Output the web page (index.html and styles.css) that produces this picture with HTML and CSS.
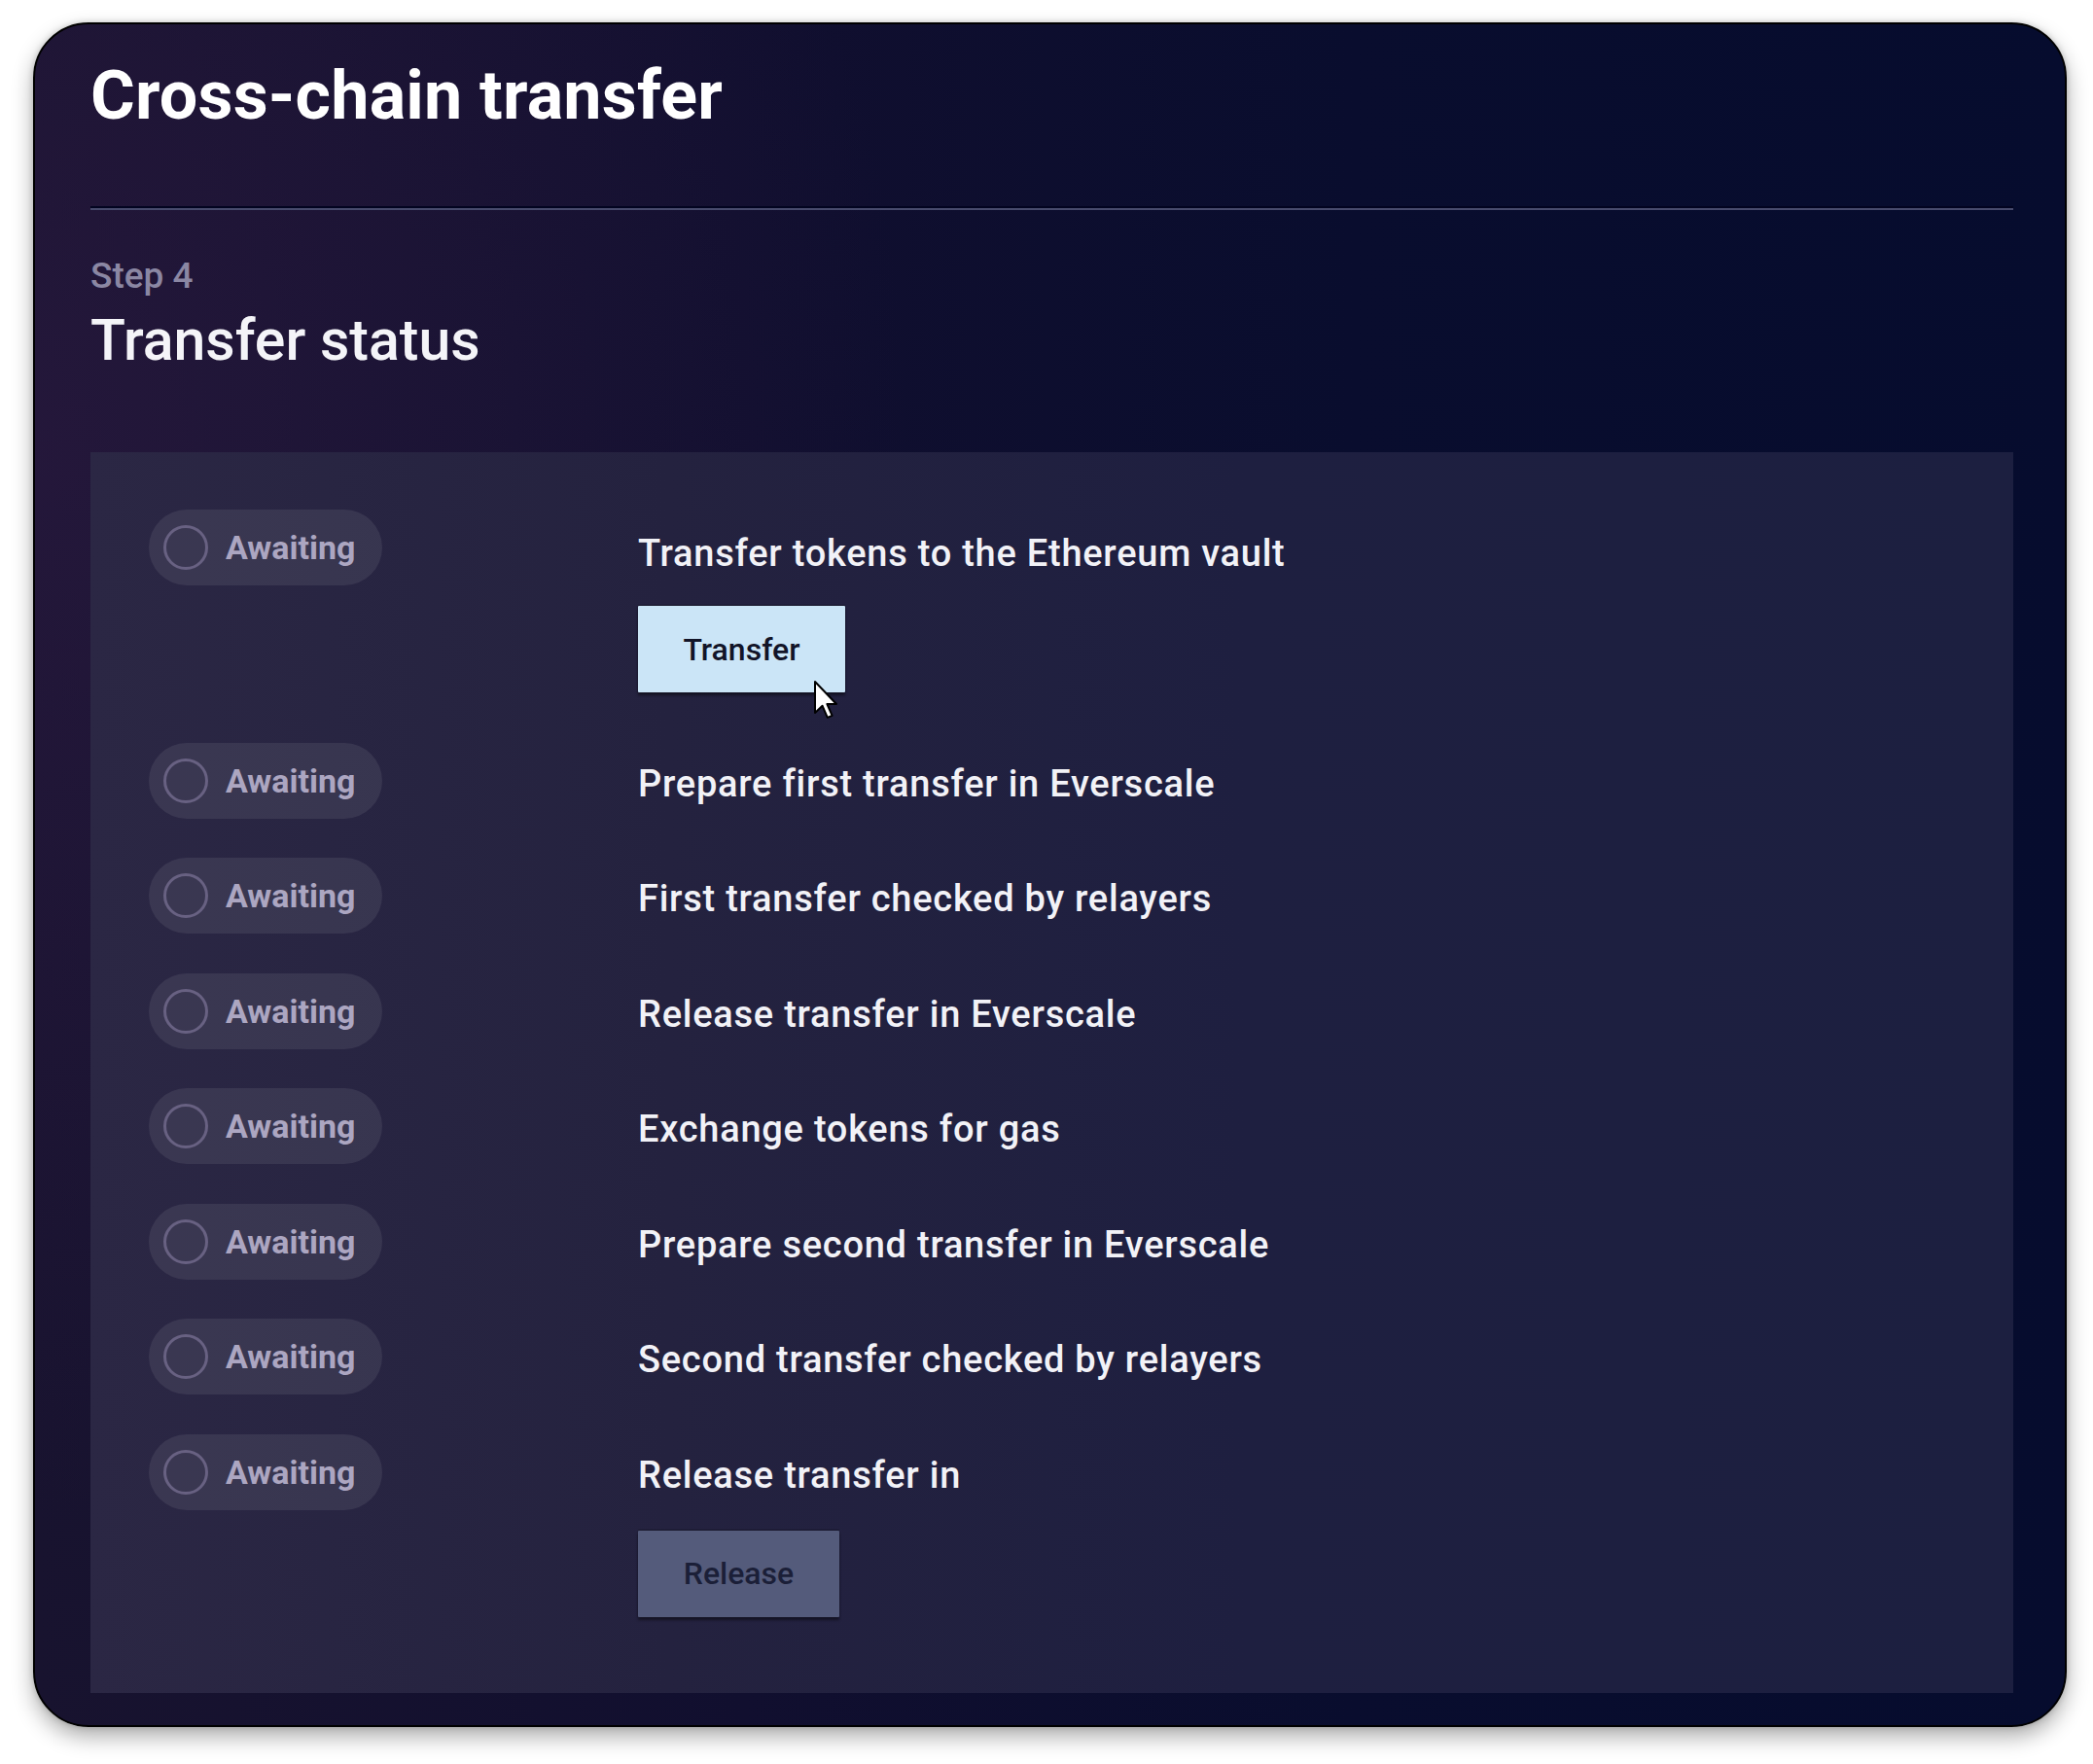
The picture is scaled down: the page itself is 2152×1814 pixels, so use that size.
FILE: index.html
```html
<!DOCTYPE html>
<html lang="en">
<head>
<meta charset="utf-8">
<title>Cross-chain transfer</title>
<link rel="stylesheet" href="styles.css">
</head>
<body>
<section class="card">
  <h1 class="title">Cross-chain transfer</h1>
  <hr class="divider">
  <div class="step-label">Step 4</div>
  <h2 class="step-title">Transfer status</h2>
  <div class="panel">
    <div class="row">
      <div class="status-col"><div class="pill"><span class="ring"></span><span class="pill-text">Awaiting</span></div></div>
      <div class="content">
        <div class="label label-first">Transfer tokens to the Ethereum vault</div>
        <div class="btn-wrap btn-wrap-first">
          <button class="btn btn-primary">Transfer</button>
          <svg class="cursor" width="26" height="42" viewBox="0 0 13 21"><path d="M1 1 L1 17 L4.8 13.4 L7.4 19.4 L9.8 18.4 L7.2 12.5 L12 12.5 Z" fill="#fff" stroke="#000" stroke-width="1" stroke-linejoin="round"/></svg>
        </div>
      </div>
    </div>
    <div class="row">
      <div class="status-col"><div class="pill"><span class="ring"></span><span class="pill-text">Awaiting</span></div></div>
      <div class="content"><div class="label">Prepare first transfer in Everscale</div></div>
    </div>
    <div class="row">
      <div class="status-col"><div class="pill"><span class="ring"></span><span class="pill-text">Awaiting</span></div></div>
      <div class="content"><div class="label">First transfer checked by relayers</div></div>
    </div>
    <div class="row">
      <div class="status-col"><div class="pill"><span class="ring"></span><span class="pill-text">Awaiting</span></div></div>
      <div class="content"><div class="label">Release transfer in Everscale</div></div>
    </div>
    <div class="row">
      <div class="status-col"><div class="pill"><span class="ring"></span><span class="pill-text">Awaiting</span></div></div>
      <div class="content"><div class="label">Exchange tokens for gas</div></div>
    </div>
    <div class="row">
      <div class="status-col"><div class="pill"><span class="ring"></span><span class="pill-text">Awaiting</span></div></div>
      <div class="content"><div class="label">Prepare second transfer in Everscale</div></div>
    </div>
    <div class="row">
      <div class="status-col"><div class="pill"><span class="ring"></span><span class="pill-text">Awaiting</span></div></div>
      <div class="content"><div class="label">Second transfer checked by relayers</div></div>
    </div>
    <div class="row">
      <div class="status-col"><div class="pill"><span class="ring"></span><span class="pill-text">Awaiting</span></div></div>
      <div class="content">
        <div class="label">Release transfer in</div>
        <div class="btn-wrap"><button class="btn btn-muted">Release</button></div>
      </div>
    </div>
  </div>
</section>
</body>
</html>
```

FILE: styles.css
```css
html, body {
  margin: 0;
  padding: 0;
  background: #ffffff;
}
body {
  padding: 23px 0 0 34px;
  font-family: Roboto, "Noto Sans", sans-serif;
  height: 1814px;
  box-sizing: border-box;
  overflow: hidden;
}
.card {
  width: 2091px;
  box-sizing: border-box;
  border: 2px solid #000;
  border-radius: 57px;
  padding: 38px 53px 33px 57px;
  background:
    radial-gradient(ellipse 900px 1100px at 0% 25%, rgba(44, 26, 66, 0.6) 0%, rgba(44, 26, 66, 0) 100%),
    linear-gradient(90deg, #18132f 0%, #110f2f 35%, #090d2e 65%, #060c2e 100%);
  box-shadow: 0 10px 22px rgba(0, 0, 0, 0.32), 0 0 6px rgba(0, 0, 0, 0.18);
}
.title {
  margin: 0;
  font-size: 70px;
  line-height: 70px;
  font-weight: 700;
  color: #ffffff;
  letter-spacing: 0.2px;
}
.divider {
  margin: 81px 0 0 0;
  border: 0;
  height: 2px;
  background: #474a6c;
  box-shadow: 0 -2px 0 #020420;
}
.step-label {
  margin-top: 46px;
  font-size: 37px;
  line-height: 43px;
  font-weight: 500;
  color: #8b87a3;
}
.step-title {
  margin: 10px 0 0 0;
  font-size: 59px;
  line-height: 70px;
  font-weight: 500;
  color: #f4f4f8;
}
.panel {
  margin-top: 80px;
  padding: 59px 60px 67px 60px;
  background: linear-gradient(90deg, #2b2744 0%, #24223f 30%, #1e1f40 60%, #1c1f40 100%);
  display: flex;
  flex-direction: column;
  gap: 40.5px;
}
.row {
  display: flex;
  align-items: flex-start;
}
.status-col {
  width: 503px;
  flex: none;
}
.pill {
  display: inline-flex;
  align-items: center;
  box-sizing: border-box;
  width: 240px;
  height: 78px;
  padding: 0 28px 0 15px;
  gap: 18px;
  border-radius: 39px;
  background: rgba(255, 255, 255, 0.08);
}
.ring {
  width: 46px;
  height: 46px;
  box-sizing: border-box;
  border: 3px solid #686182;
  border-radius: 50%;
  flex: none;
}
.pill-text {
  font-size: 34px;
  font-weight: 700;
  color: #aca6c1;
  line-height: 1;
}
.content {
  display: flex;
  flex-direction: column;
  align-items: flex-start;
}
.label {
  padding-top: 6px;
  font-size: 38px;
  line-height: 72px;
  font-weight: 500;
  letter-spacing: 0.75px;
  color: #f2f2f7;
}
.label-first {
  padding-top: 9px;
}
.btn-wrap {
  position: relative;
  margin-top: 21px;
  margin-bottom: 11px;
}
.btn-wrap-first {
  margin-top: 18px;
}
.btn {
  display: block;
  height: 89px;
  border: 0;
  border-radius: 1px;
  font-family: Roboto, "Noto Sans", sans-serif;
  font-size: 32px;
  font-weight: 500;
  padding: 0;
  box-shadow: 0 3px 3px rgba(0, 0, 0, 0.45), 0 -1px 1px rgba(0, 0, 0, 0.35);
}
.btn-primary {
  width: 213px;
  background: #cbe5f7;
  color: #121428;
}
.btn-muted {
  width: 207px;
  background: #545b7b;
  color: #1b1f38;
}
.cursor {
  position: absolute;
  left: 180px;
  top: 76px;
}
```
